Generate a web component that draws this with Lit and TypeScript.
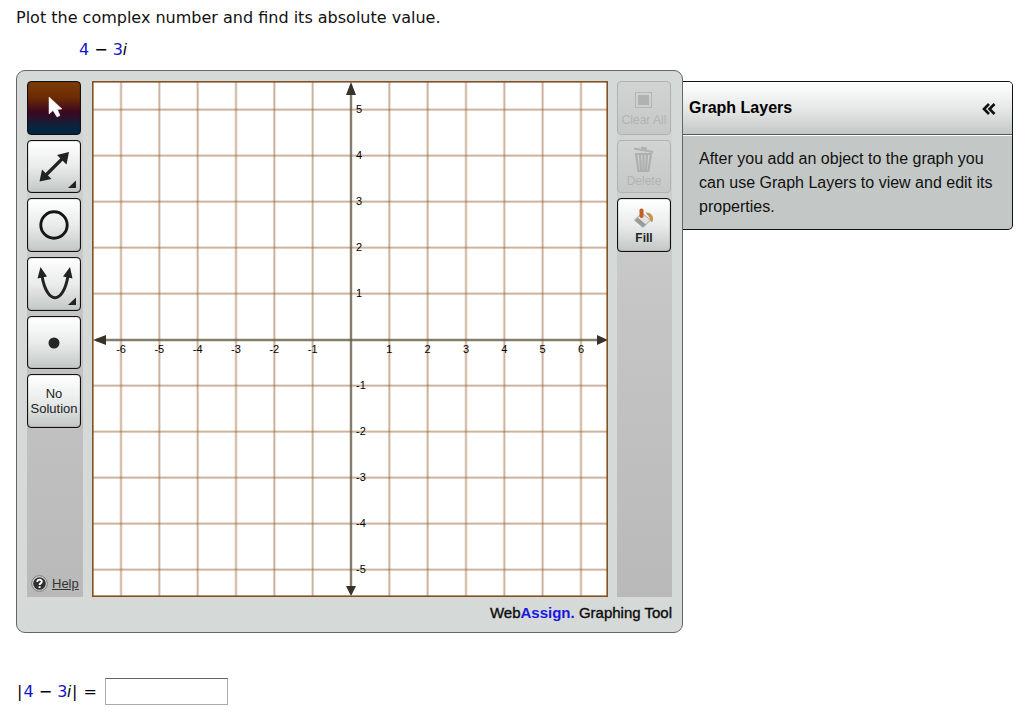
import { LitElement, html, svg, css } from "lit";
import { customElement, state } from "lit/decorators.js";

const SIZE = 516;
const CENTER = 259;
const STEP_X = 38.33;
const STEP_Y = 46;
const range = (n: number) => Array.from({ length: n * 2 + 1 }, (_, i) => i - n);

@customElement("graph-canvas")
class GraphCanvas extends LitElement {
  static styles = css`
    :host { display: block; }
    svg { display: block; width: 100%; height: auto; }
    .paper { fill: #fff; }
    .frame { fill: none; stroke: #85501f; stroke-width: 1.6; }
    .grid { stroke: #a5744a; stroke-opacity: 0.28; stroke-width: 2.8; }
    .core { stroke: #8c5a22; stroke-opacity: 0.35; stroke-width: 1; }
    .axis { stroke: #655c43; stroke-opacity: 0.8; stroke-width: 2.4; }
    .head { fill: #37322a; }
    .label { font: 11px "Liberation Sans", Arial, sans-serif; fill: #000; }
    .middle { text-anchor: middle; }
  `;
  render() {
    const xs = range(6);
    const ys = range(5);
    return html`<svg viewBox="0 0 ${SIZE} ${SIZE}" role="img" aria-label="Coordinate plane">
      <rect class="paper" width=${SIZE} height=${SIZE}></rect>
      ${["grid", "core"].map((c) => svg`
        ${xs.filter(Boolean).map((n) => svg`<line class=${c} x1=${CENTER + n * STEP_X} x2=${CENTER + n * STEP_X} y1="0" y2=${SIZE}></line>`)}
        ${ys.filter(Boolean).map((n) => svg`<line class=${c} y1=${CENTER + n * STEP_Y - 0.3} y2=${CENTER + n * STEP_Y - 0.3} x1="0" x2=${SIZE}></line>`)}`)}
      <line class="axis" x1="4" x2="512" y1="259" y2="259"></line>
      <line class="axis" x1="259" x2="259" y1="4" y2="512"></line>
      <path class="head" d="M1 259 14 254V264ZM516 259 505 254V264ZM259 1 254 14H264ZM259 515 254 505H264Z"></path>
      <rect class="frame" x="0.8" y="0.8" width="514.4" height="514.4"></rect>
      ${xs.filter(Boolean).map((n) => svg`<text class="label middle" x=${CENTER + n * STEP_X} y="272">${n}</text>`)}
      ${ys.filter(Boolean).map((n) => svg`<text class="label" x="264" y=${CENTER - n * STEP_Y + 3}>${n}</text>`)}
    </svg>`;
  }
}

const cursor = html`<svg class="icon" viewBox="0 0 52 52" aria-hidden="true"><path fill="#fff" stroke="#fff3e8" stroke-width=".5" d="M21 15V32L25 28.500 29 35 32 33.500 29.500 27.500 34 27Z"/></svg>`;
const line = html`<svg class="icon" viewBox="0 0 52 52" aria-hidden="true"><path d="M17 35 36 16" stroke="#222" stroke-width="3.200"/><path fill="#222" d="M11.500 40.500 14 28.500 23.500 38ZM41 11 38.500 23.500 29 14Z"/><path class="more" d="M48 39.500V47H40Z"/></svg>`;
const circle = html`<svg class="icon" viewBox="0 0 52 52" aria-hidden="true"><circle cx="26" cy="26" r="13.200" fill="none" stroke="#151515" stroke-width="2.900"/></svg>`;
const parabola = html`<svg class="icon" viewBox="0 0 52 52" aria-hidden="true"><path d="M14 18C19 47 35 47 40 18" fill="none" stroke="#222" stroke-width="3"/><path fill="#222" d="M12.500 9 9.500 20.500 19 18.500ZM42 9 35 18.500 44.500 20.500Z"/><path class="more" d="M48 39.500V47H40Z"/></svg>`;
const point = html`<svg class="icon" viewBox="0 0 52 52" aria-hidden="true"><circle cx="26" cy="26" r="5.500" fill="#252525"/></svg>`;
const clear = html`<svg class="small" viewBox="0 0 26 26" aria-hidden="true"><rect x="4.500" y="5.500" width="16" height="15" fill="none" stroke="#b4b6b5"/><rect x="7" y="8" width="11" height="10" fill="#b0b2b1"/></svg>`;
const trash = html`<svg class="bin" viewBox="0 0 26 30" aria-hidden="true"><g fill="none" stroke="#aeb0af" stroke-width="2.200"><path d="M3 4.500 22 8M10 3.500 16 4.500M4.500 10H21M5 10 7.500 27H17.500L20 10ZM9 11 10 26M12.500 11V26M16 11 15 26"/></g></svg>`;
const bucket = html`<svg class="small" viewBox="0 0 26 26" aria-hidden="true"><path d="M3.500 15 11 8 19.500 15 12 22.500Z" fill="#e2e2e2" stroke="#888" stroke-width=".7"/><path d="M4 15.500 12 22 15 19.500 6.500 12.500Z" fill="#999"/><path d="M14.500 7.500C20 7 23.500 11 21.500 17 19.500 17 19 15 18.500 12.500Z" fill="#c9914c"/><rect x="8.500" y="3.500" width="4" height="9.500" rx="1.800" fill="#c25f28"/></svg>`;

@customElement("app-root")
class AppRoot extends LitElement {
  @state() private tool = "Select";

  static styles = css`
    :host { display: block; font: 16px/20px "DejaVu Sans", Verdana, sans-serif; color: #111; }
    * { box-sizing: border-box; }
    main { padding: 8px 11px 8px 16px; }
    p { margin: 0; }
    .expression { padding: 12px 0 10px 63px; }
    .num { color: #1414cc; }
    .expression, .answer { color: #000; }
    i { font-family: "Liberation Sans", Arial, sans-serif; }
    .workspace { display: flex; align-items: flex-start; }
    .tool { flex: 0 1 667px; min-width: 0; padding: 10px; border: 1px solid #666; border-radius: 9px; background: #d5d9d8; }
    .board { display: grid; grid-template-columns: 56px 1fr 55px; gap: 9px; }
    .rail { display: flex; flex-direction: column; justify-content: space-between; background: linear-gradient(#d5d9d8, #c6c6c6 40%, #b9b9b9); }
    .group { display: grid; grid-auto-rows: 1fr; grid-template-columns: 54px; gap: 5px; }
    .left .group { height: 347px; }
    .right .group { height: 171px; }
    .btn { display: flex; flex-direction: column; align-items: center; justify-content: center; min-width: 0; padding: 0; overflow: hidden; border: 1px solid #111; border-radius: 4px; background: linear-gradient(#fff, #e9ecea 50%, #c2c7c5); box-shadow: inset 0 0 1px #111; color: #222; font: 13px/15px "Liberation Sans", Arial, sans-serif; cursor: pointer; }
    .btn.on { background: linear-gradient(#7d3b08, #6b2c03 30%, #3c0620 58%, #06263f 88%); }
    .btn:disabled { border-color: #b0b2b1; background: linear-gradient(#d2d4d3, #c6c8c7); box-shadow: none; color: #b1b3b2; font-size: 12px; cursor: default; }
    .bold { font-weight: bold; font-size: 12px; }
    .icon { width: 52px; height: 52px; flex: none; }
    .small { width: 26px; height: 26px; flex: none; }
    .bin { width: 26px; height: 30px; flex: none; }
    .more { fill: #222; }
    .help { display: flex; align-items: center; gap: 4px; padding: 4px 4px 5px; color: #333; font: 13px/16px "Liberation Sans", Arial, sans-serif; }
    .help svg { width: 17px; height: 17px; }
    .brand { padding-top: 7px; text-align: right; color: #000; font: 15px/18px "Liberation Sans", Arial, sans-serif; }
    .brand b { color: #1717e0; }
    .web { -webkit-text-stroke: 0.4px #222; }
    .layers { flex: 1; margin-top: 11px; border: 1px solid #111; border-width: 1px 1px 1px 0; border-radius: 0 5px 5px 0; background: #c3c8c6; font: 16px/24px "Liberation Sans", Arial, sans-serif; overflow: hidden; color: #111; }
    .top { display: flex; align-items: center; justify-content: space-between; height: 53px; padding: 0 16px 0 6px; border-bottom: 1px solid #555; background: linear-gradient(#fff, #e4e6e5 55%, #c3c8c6); }
    h2 { margin: 0; font-size: 16px; line-height: 24px; color: #000; }
    .fold { display: flex; padding: 2px 0 0; border: 0; background: none; cursor: pointer; }
    .fold svg { width: 14px; height: 12px; }
    .layers p { padding: 11px 16px 10px; border-top: 1px solid #fff; }
    .answer { display: flex; align-items: center; gap: 8px; padding-top: 45px; }
    .bar { padding: 0 1px; }
    .answer input { width: 123px; height: 27px; padding: 2px 4px; border: 1px solid #aaa; border-top-color: #666; background: #fff; font: inherit; }
  `;

  private button(name: string, content: unknown) {
    return html`<button class="btn ${this.tool === name ? "on" : ""}" aria-label=${name} aria-pressed=${this.tool === name}
      @click=${() => (this.tool = name)}>${content}</button>`;
  }

  render() {
    return html`<main>
      <p>Plot the complex number and find its absolute value.</p>
      <p class="expression"><span class="num">4</span> − <span class="num">3</span><i>i</i></p>
      <div class="workspace">
        <section class="tool" aria-label="Graphing tool">
          <div class="board">
            <div class="rail left">
              <div class="group">
                ${this.button("Select", cursor)}
                ${this.button("Line", line)}
                ${this.button("Circle", circle)}
                ${this.button("Parabola", parabola)}
                ${this.button("Point", point)}
                ${this.button("No Solution", html`<span>No<br>Solution</span>`)}
              </div>
              <a class="help" href="#help"><svg viewBox="0 0 17 17" aria-hidden="true"><circle cx="8.500" cy="8.500" r="7.800" fill="#ddd" stroke="#777"/><circle cx="8.500" cy="8.500" r="6.300" fill="#303030"/><path d="M6.300 7C6.300 3.800 11 4 10.800 6.700 10.700 8.300 8.600 8 8.600 10M8.600 11.300V13" fill="none" stroke="#fff" stroke-width="1.900"/></svg>Help</a>
            </div>
            <graph-canvas></graph-canvas>
            <div class="rail right">
              <div class="group">
                <button class="btn" disabled>${clear}<span>Clear All</span></button>
                <button class="btn" disabled>${trash}<span>Delete</span></button>
                <button class="btn bold">${bucket}<span>Fill</span></button>
              </div>
            </div>
          </div>
          <p class="brand"><span class="web">Web</span><b>Assign.</b> <span class="web">Graphing Tool</span></p>
        </section>
        <section class="layers">
          <div class="top">
            <h2>Graph Layers</h2>
            <button class="fold" aria-label="Collapse graph layers"><svg viewBox="0 0 14 12"><path d="M7 1 2 6 7 11M12.500 1 7.500 6 12.500 11" fill="none" stroke="#111" stroke-width="2.600"/></svg></button>
          </div>
          <p>After you add an object to the graph you can use Graph Layers to view and edit its properties.</p>
        </section>
      </div>
      <div class="answer"><label for="value"><span class="bar">|</span><span class="num">4</span> − <span class="num">3</span><i>i</i><span class="bar">|</span> =</label><input id="value" type="text" autocomplete="off"></div>
    </main>`;
  }
}
